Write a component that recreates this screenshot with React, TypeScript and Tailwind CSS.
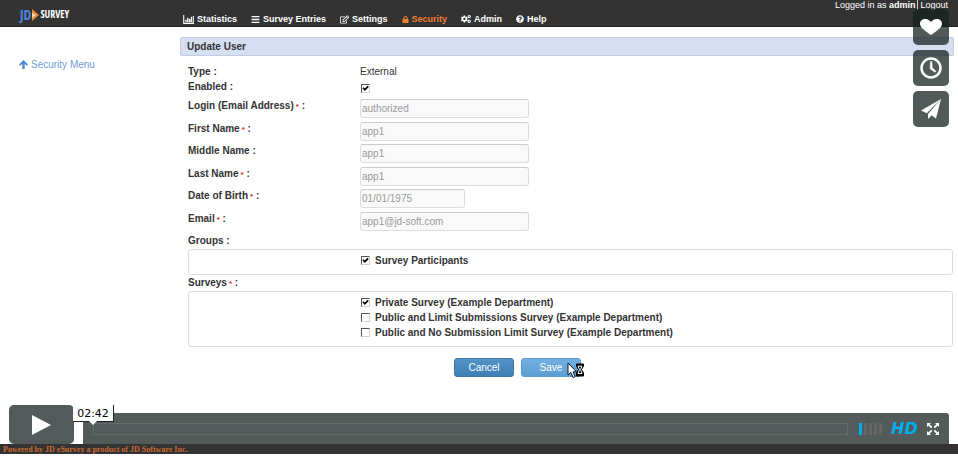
import { ReactNode } from "react";
import { FaBars, FaCogs, FaHeart, FaLock, FaQuestionCircle, FaRegEdit } from "react-icons/fa";

const BarChart = () => (
  <svg viewBox="0 0 12 10" className="h-[9px] w-[11px]" fill="none" stroke="currentColor" aria-hidden="true">
    <path d="M.7 0v9.3H12M11.3 1v8" strokeWidth="1.2" />
    <path d="M3.2 8V5.2M5.2 8V3M7.2 8V4.4M9.2 8V2" strokeWidth="1.5" />
  </svg>
);

function NavItem({ icon, label, active }: { icon: ReactNode; label: string; active?: boolean }) {
  return (
    <a href="#" className={`flex items-center gap-[3px] ${active ? "text-[#ef7f2d]" : "text-white"}`}>
      {icon}
      {label}
    </a>
  );
}

function Tick({ id, checked }: { id: string; checked?: boolean }) {
  return (
    <span className="grid size-[9px] shrink-0">
      <input
        id={id}
        type="checkbox"
        defaultChecked={checked}
        className="peer col-start-1 row-start-1 size-[9px] appearance-none border border-t-[#555] border-r-[#d8d5d0] border-b-[#d8d5d0] border-l-[#555] bg-white"
      />
      <svg viewBox="0 0 9 9" className="pointer-events-none invisible col-start-1 row-start-1 size-[9px] peer-checked:visible" fill="none" stroke="#000" strokeWidth="1.7" aria-hidden="true">
        <path d="M2 3.7l1.8 2L7.2 2.3" />
      </svg>
    </span>
  );
}

const Star = () => <span className="pl-[2px] text-[8px] text-[#d22]">*</span>;

const fields = [
  { id: "login", label: "Login (Email Address)", value: "authorized", required: true },
  { id: "first", label: "First Name", value: "app1", required: true },
  { id: "middle", label: "Middle Name", value: "app1" },
  { id: "last", label: "Last Name", value: "app1", required: true },
  { id: "dob", label: "Date of Birth", value: "01/01/1975", required: true, short: true },
  { id: "email", label: "Email", value: "app1@jd-soft.com", required: true },
];

const surveys = [
  { id: "private", label: "Private Survey (Example Department)", checked: true },
  { id: "limit", label: "Public and Limit Submissions Survey (Example Department)" },
  { id: "nolimit", label: "Public and No Submission Limit Survey (Example Department)" },
];

const sideButton = "flex size-9 items-center justify-center rounded-[5px] bg-[#172322]/75 text-white";

export default function App() {
  return (
    <div className="relative flex min-h-screen flex-col bg-white font-['Liberation_Sans',Arial,sans-serif] text-[10px] leading-[15px] text-[#333]">
      <header className="flex h-[27px] shrink-0 justify-between border-b border-[#222] bg-[#333] pr-[10px] text-[9px] font-bold text-white">
        <div className="flex">
          <a href="#" className="flex w-[183px] items-center gap-px pt-[3px] pl-5 font-['Liberation_Sans_Narrow','Open_Sans_Condensed','Liberation_Sans',sans-serif] text-[10px]">
            <span className="text-[14px] font-normal text-[#4b86dc]">JD</span>
            <svg viewBox="0 0 7 12" className="h-3 w-[7px]" aria-hidden="true">
              <path d="M0 0l7 6-7 6z" fill="#e98b3a" />
              <path d="M0 4l4 2-4 3z" fill="#fbd9a8" />
            </svg>
            <span>SURVEY</span>
          </a>
          <nav className="flex items-center gap-[14px] pt-[12px]">
            <NavItem icon={<BarChart />} label="Statistics" />
            <NavItem icon={<FaBars className="size-[9px]" />} label="Survey Entries" />
            <NavItem icon={<FaRegEdit className="size-[9px]" />} label="Settings" />
            <NavItem icon={<FaLock className="size-[7px]" />} label="Security" active />
            <NavItem icon={<FaCogs className="size-[10px]" />} label="Admin" />
            <NavItem icon={<FaQuestionCircle className="size-[8px]" />} label="Help" />
          </nav>
        </div>
        <div className="flex h-[10px] items-center gap-[2px]">
          <span>
            <span className="font-normal">Logged in as</span> admin
          </span>
          <span className="h-[10px] w-px bg-[#ccc]" />
          <a href="#" className="font-normal">Logout</a>
        </div>
      </header>

      <div className="flex flex-1">
        <aside className="w-[180px] shrink-0 pt-[30px] pl-[19px]">
          <a href="#" className="flex items-center gap-[3px] text-[#6f9bd8]">
            <svg viewBox="0 0 10 10" className="size-[9px]" fill="#4f86d6" aria-hidden="true">
              <path d="M5 0l5 5-1.400 1.400L6.300 4.200V10H3.700V4.200L1.400 6.400 0 5z" />
            </svg>
            Security Menu
          </a>
        </aside>

        <main className="flex-1 pt-[10px] pr-1">
          <h1 className="h-[19px] rounded-[2px] border border-[#c5cce0] bg-[#d6def1] px-[6px] leading-[18px] font-bold">Update User</h1>
          <form className="pt-2 pr-px pl-2" onSubmit={(e) => e.preventDefault()}>
            <div className="flex">
              <span className="w-[172px] font-bold">Type :</span>
              <span>External</span>
            </div>
            <div className="flex">
              <label htmlFor="enabled" className="w-[172px] font-bold">Enabled :</label>
              <span className="pt-[5px] pl-px">
                <Tick id="enabled" checked />
              </span>
            </div>
            <div className="grid h-[139px] grid-rows-6 pt-1">
              {fields.map((f) => (
                <div key={f.id} className="flex">
                  <label htmlFor={f.id} className="w-[172px] font-bold">
                    {f.label}
                    {f.required && <Star />} :
                  </label>
                  <input
                    id={f.id}
                    type="text"
                    disabled
                    defaultValue={f.value}
                    className={`mt-px h-[19px] rounded-[3px] border border-[#ddd] border-t-[#ccc] bg-[#f9f9f9] px-px text-[#999] ${f.short ? "w-[105px]" : "w-[169px]"}`}
                  />
                </div>
              ))}
            </div>
            <fieldset>
              <legend className="h-4 font-bold">Groups :</legend>
              <div className="h-[26px] rounded-[3px] border border-[#ddd] pt-[3px] pl-[172px] font-bold">
                <div className="flex items-center gap-[5px]">
                  <Tick id="participants" checked />
                  <label htmlFor="participants">Survey Participants</label>
                </div>
              </div>
            </fieldset>
            <fieldset>
              <legend className="h-4 font-bold">
                Surveys
                <Star /> :
              </legend>
              <div className="h-14 rounded-[3px] border border-[#ddd] pt-[3px] pl-[172px] font-bold">
                {surveys.map((s) => (
                  <div key={s.id} className="flex items-center gap-[5px]">
                    <Tick id={s.id} checked={s.checked} />
                    <label htmlFor={s.id}>{s.label}</label>
                  </div>
                ))}
              </div>
            </fieldset>
            <div className="flex gap-[7px] pt-[11px] pl-[266px] text-white">
              <button type="button" className="h-[19px] w-[60px] rounded-[3px] border border-[#3a76a8] bg-linear-to-b from-[#5293c8] to-[#3f7fb3]">
                Cancel
              </button>
              <button type="submit" className="relative h-[19px] w-[60px] rounded-[3px] border border-[#5b9bd0] bg-linear-to-b from-[#73b0e2] to-[#5c9dd3]">
                Save
                <svg viewBox="0 0 18 18" className="absolute top-[3px] left-[45px] size-[18px]" aria-hidden="true">
                  <path d="M1 1v12l2.800-2.500L6 15.500l2.200-1-2.200-4.700h3.500z" fill="#fff" stroke="#000" strokeWidth=".9" />
                  <path d="M9.500 2h7v2l-2 3.500 2 3.500v3h-7v-3l2-3.500-2-3.500z" fill="#000" stroke="#000" />
                  <path d="M11 4.200h4L13.500 7.500 15 11.500h-4l1.500-4z" fill="none" stroke="#fff" strokeWidth="1" />
                </svg>
              </button>
            </div>
          </form>
        </main>
      </div>

      <footer className="mb-[2px] h-[10px] shrink-0 overflow-hidden bg-[#333] pl-[3px] font-['Liberation_Serif',serif] text-[8px] leading-[11px] font-bold text-[#c9682f]">
        Powered by JD eSurvey a product of JD Software Inc.
      </footer>

      <div className="absolute top-[9px] right-[9px] flex flex-col gap-[5px]">
        <button aria-label="Like" className={sideButton}>
          <svg viewBox="0 0 22 16" className="h-4 w-[22px]" fill="#fff" aria-hidden="true">
            <path d="M11 16C6 12.500 0 9 0 4.800 0 2 2.200 0 5.300 0 8 0 10 1.500 11 3c1-1.500 3-3 5.700-3C19.800 0 22 2 22 4.800 22 9 16 12.500 11 16z" />
          </svg>
        </button>
        <button aria-label="Watch later" className={sideButton}>
          <svg viewBox="0 0 22 22" className="size-[22px]" fill="none" stroke="#fff" aria-hidden="true">
            <circle cx="11" cy="11" r="9.500" strokeWidth="2.500" />
            <path d="M10.500 4.500h1.300l.6 6.200 3.600 3.600-1 1L10 11.800z" fill="#fff" strokeWidth=".5" />
          </svg>
        </button>
        <button aria-label="Share" className={sideButton}>
          <svg viewBox="0 0 20 20" className="size-5" fill="#fff" aria-hidden="true">
            <path d="M20 0L0 11.500l5.800 2.800zM20 0L7 15v5l3-3zM20 0l-9.500 16.200 4.500 3.300z" />
          </svg>
        </button>
      </div>

      <div className="absolute right-[9px] bottom-3 left-[9px] flex items-end gap-[9px]">
        <button aria-label="Play" className="flex h-[39px] w-[65px] items-center justify-center rounded-[5px] bg-[#525b5a]">
          <svg viewBox="0 0 19 20" className="h-5 w-[19px]" fill="#fff" aria-hidden="true">
            <path d="M0 0l19 10L0 20z" />
          </svg>
        </button>
        <div className="relative flex h-[31px] flex-1 items-center rounded-tr-[3px] bg-[#525b5a] px-[10px]">
          <div className="h-3 flex-1 border border-[#686868]" />
          <div className="flex gap-[2px] pl-[11px]">
            <span className="h-3 w-[3px] bg-[#00adef]" />
            <span className="h-3 w-[3px] bg-[#666]" />
            <span className="h-3 w-[3px] bg-[#666]" />
            <span className="h-3 w-[3px] bg-[#666]" />
            <span className="h-3 w-[3px] bg-[#666]" />
          </div>
          <button className="w-9 pl-[9px] text-left font-['DejaVu_Sans',Verdana,sans-serif] text-[16px] leading-3 font-bold text-[#00adef] italic">HD</button>
          <button aria-label="Fullscreen" className="ml-[9px]">
            <svg viewBox="0 0 12 12" className="size-3" fill="#fff" stroke="#fff" strokeWidth="1.800" aria-hidden="true">
              <path d="M0 0h4L0 4zM12 0v4L8 0zM0 12V8l4 4zM12 12H8l4-4z" stroke="none" />
              <path d="M1 1l3.700 3.700M11 1L7.300 4.700M1 11l3.700-3.700M11 11L7.300 7.300" />
            </svg>
          </button>
          <div className="absolute -top-2 -left-[10px] flex h-[17px] w-[41px] items-center justify-center border-r border-b border-[#222] bg-white font-['DejaVu_Sans',Verdana,sans-serif] text-[11px] text-black">
            02:42
            <svg viewBox="0 0 8 4" className="absolute top-4 left-4 h-1 w-2" fill="#fff" aria-hidden="true">
              <path d="M0 0h8L4 4z" />
            </svg>
          </div>
        </div>
      </div>
    </div>
  );
}
